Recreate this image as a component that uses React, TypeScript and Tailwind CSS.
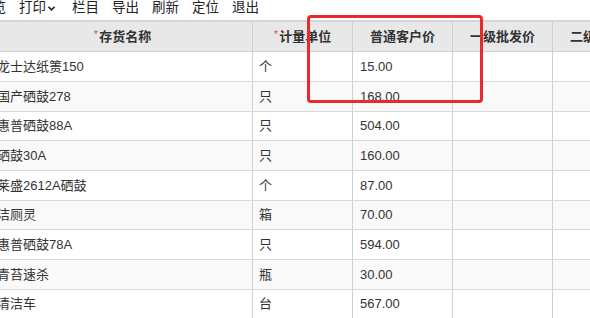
import React from 'react';

const rows = [
  { name: '龙士达纸箦150', unit: '个', price: '15.00' },
  { name: '国产硒鼓278', unit: '只', price: '168.00' },
  { name: '惠普硒鼓88A', unit: '只', price: '504.00' },
  { name: '硒鼓30A', unit: '只', price: '160.00' },
  { name: '莱盛2612A硒鼓', unit: '个', price: '87.00' },
  { name: '洁厕灵', unit: '箱', price: '70.00' },
  { name: '惠普硒鼓78A', unit: '只', price: '594.00' },
  { name: '青苔速杀', unit: '瓶', price: '30.00' },
  { name: '清洁车', unit: '台', price: '567.00' },
];

const heights = ['h-[30px]', 'h-[30px]', 'h-[29px]'];

const tools = ['栏目', '导出', '刷新', '定位', '退出'];

export default function App() {
  return (
    <div
      className="relative w-[590px] h-[318px] overflow-hidden bg-white text-[13px] text-[#333]"
      style={{ fontFamily: '"Liberation Sans", "Noto Sans CJK SC", sans-serif' }}
    >
      {/* toolbar */}
      <div className="h-[20px] flex items-start gap-[13px] -ml-[21px] leading-[15px] text-[13.5px] text-[#222] whitespace-nowrap">
        <span>预览</span>
        <span className="flex items-center mr-[3px]">
          打印
          <svg width="9" height="9" viewBox="0 0 10 10" className="ml-[1px] mt-[1px]">
            <path d="M1.5 3 L5 6.5 L8.5 3" stroke="#222" strokeWidth="1.8" fill="none" />
          </svg>
        </span>
        {tools.map((t) => (
          <span key={t}>{t}</span>
        ))}
      </div>

      {/* grid */}
      <div className="-ml-[7px] w-[700px] border-t-2 border-[#d6d6d6]">
        <div className="grid grid-cols-[260px_100px_100px_100px_100px] h-[30px] bg-[#e8e8e8] border-b border-[#cfcfcf] font-bold whitespace-nowrap">
          <div className="flex items-center justify-center border-r border-[#d0d0d0]">
            <span className="text-[#e5486a] font-normal text-[11px] -mt-[5px] mr-[1px]">*</span>存货名称
          </div>
          <div className="flex items-center justify-center border-r border-[#d0d0d0]">
            <span className="text-[#e5486a] font-normal text-[11px] -mt-[5px] mr-[1px]">*</span>计量单位
          </div>
          <div className="flex items-center justify-center border-r border-[#d0d0d0]">普通客户价</div>
          <div className="flex items-center justify-center border-r border-[#d0d0d0]">一级批发价</div>
          <div className="flex items-center justify-center border-r border-[#d0d0d0]">二级批发价</div>
        </div>
        {rows.map((r, i) => (
          <div
            key={r.name}
            className={`grid grid-cols-[260px_100px_100px_100px_100px] border-b border-[#d9d9d9] ${heights[i % 3]} ${i % 2 === 1 ? 'bg-[#f9f9f9]' : 'bg-white'}`}
          >
            <div className="flex items-center pl-[4px] border-r border-[#d0d0d0] whitespace-nowrap">{r.name}</div>
            <div className="flex items-center pl-[6px] border-r border-[#d0d0d0]">{r.unit}</div>
            <div className="flex items-center pl-[7px] border-r border-[#d0d0d0]">{r.price}</div>
            <div className="border-r border-[#d0d0d0]"></div>
            <div className="border-r border-[#d0d0d0]"></div>
          </div>
        ))}
      </div>

      {/* highlight box */}
      <div className="absolute left-[307px] top-[15px] w-[176px] h-[88px] border-[3px] border-[#e62a2e] rounded-[4px]" />
    </div>
  );
}
